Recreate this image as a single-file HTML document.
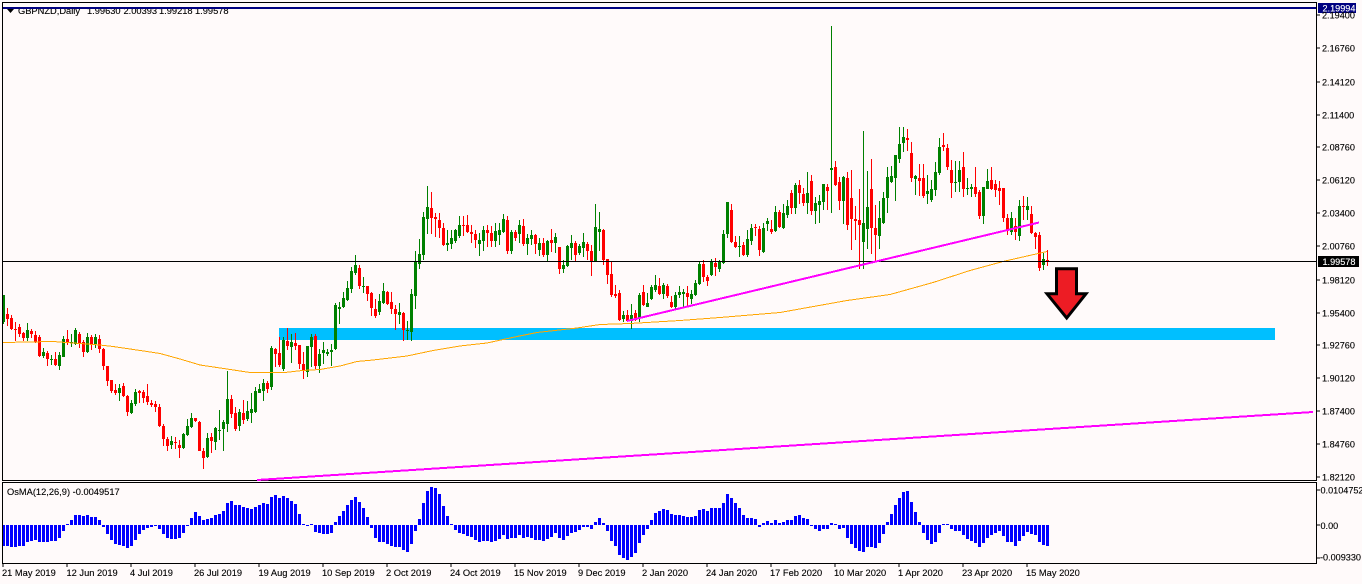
<!DOCTYPE html>
<html>
<head>
<meta charset="utf-8">
<title>GBPNZD Daily</title>
<style>
html,body{margin:0;padding:0;background:#fffafa;width:1362px;height:584px;overflow:hidden}
svg{display:block;position:absolute;left:0;top:0}
text{font-family:"Liberation Sans",sans-serif;font-size:9.3px;fill:#000;stroke:#000;stroke-width:.12}
text.n{font-size:9.1px}
text.w{fill:#fff;stroke:#fff}
</style>
</head>
<body>
<svg id="c" xmlns="http://www.w3.org/2000/svg" width="1362" height="584" viewBox="0 0 1362 584">
<rect x="0" y="0" width="1362" height="584" fill="#fffafa"/>
<rect x="279" y="328" width="996" height="12" fill="#00bfff"/>
<g id="candles" shape-rendering="crispEdges"></g>
<g id="osma" shape-rendering="crispEdges" fill="#0000ff"></g>
<polyline shape-rendering="crispEdges" fill="none" stroke="#ffa500" stroke-width="1" points="3,342.5 53,341.5 100,345 113,346.5 147,351.5 160,353.5 180,359 200,365 227,369 250,372.5 285,372.5 302,370.5 320,369.5 340,366 357,361.5 373,360 407,356 433,350.5 460,346 487,343 517,336.5 537,332.5 577,328 600,324.5 630,323.5 680,320.5 720,317.5 780,312.5 847,300.5 890,294.5 933,282.5 970,270.5 1003,261.5 1047,251.5"/>
<g shape-rendering="crispEdges" fill="#000">
<rect x="2" y="261" width="1314" height="1"/>
<rect x="2" y="2" width="1314" height="1"/>
<rect x="2" y="2" width="1" height="478"/>
<rect x="1316" y="2" width="1" height="478"/>
<rect x="2" y="480" width="1315" height="1"/>
<rect x="2" y="482" width="1315" height="1"/>
<rect x="2" y="482" width="1" height="81"/>
<rect x="1316" y="482" width="1" height="81"/>
<rect x="2" y="563" width="1315" height="1"/>
<path d="M1317 15h3M1317 48h3M1317 82h3M1317 115h3M1317 147h3M1317 180h3M1317 213h3M1317 246h3M1317 280h3M1317 313h3M1317 345h3M1317 378h3M1317 411h3M1317 444h3M1317 477h3M1317 490h3M1317 525h3M1317 558h3M3 564v3M67 564v3M131 564v3M195 564v3M259 564v3M323 564v3M387 564v3M451 564v3M515 564v3M579 564v3M643 564v3M707 564v3M771 564v3M835 564v3M899 564v3M963 564v3M1027 564v3" stroke="#000" stroke-width="1" fill="none"/>
</g>
<g>
<polygon points="7,9 14,9 10.5,13" fill="#000"/>
<text x="18" y="14">GBPNZD,Daily</text>
<text x="87" y="14">1.99630</text>
<text x="123.5" y="14">2.00393</text>
<text x="159" y="14">1.99218</text>
<text x="195" y="14">1.99578</text>
</g>
<rect x="3" y="7" width="1313" height="2" fill="#000080" shape-rendering="crispEdges"/>
<line x1="257" y1="480" x2="1313" y2="412" stroke="#ff00ff" stroke-width="2" shape-rendering="crispEdges"/>
<line x1="627" y1="321" x2="1039" y2="222.5" stroke="#ff00ff" stroke-width="2" shape-rendering="crispEdges"/>
<polygon points="1056.5,268.8 1076.5,268.8 1076.5,293.8 1086,293.8 1066.7,318 1047,293.8 1056.5,293.8" fill="#ed1c24" stroke="#000" stroke-width="3"/>
<g>
<rect x="1318" y="3" width="38" height="10" fill="#000080" shape-rendering="crispEdges"/>
<text class="n w" x="1322.5" y="11.5">2.19994</text>
<text class="n" x="1322" y="18.5">2.19400</text>
<text class="n" x="1322" y="51.5">2.16760</text>
<text class="n" x="1322" y="85.5">2.14120</text>
<text class="n" x="1322" y="118.5">2.11400</text>
<text class="n" x="1322" y="150.5">2.08760</text>
<text class="n" x="1322" y="183.5">2.06120</text>
<text class="n" x="1322" y="216.5">2.03400</text>
<text class="n" x="1322" y="249.5">2.00760</text>
<rect x="1318" y="256" width="41" height="11" fill="#000" shape-rendering="crispEdges"/>
<text class="n w" x="1322.5" y="265">1.99578</text>
<text class="n" x="1322" y="283.5">1.98120</text>
<text class="n" x="1322" y="316.5">1.95400</text>
<text class="n" x="1322" y="348.5">1.92760</text>
<text class="n" x="1322" y="381.5">1.90120</text>
<text class="n" x="1322" y="414.5">1.87400</text>
<text class="n" x="1322" y="447.5">1.84760</text>
<text class="n" x="1322" y="480.5">1.82120</text>
<text class="n" x="1320.5" y="493.5">0.0104752</text>
<text class="n" x="1320.5" y="529">0.00</text>
<text class="n" x="1320" y="560.5">-0.009330</text>
<text x="7" y="495">OsMA(12,26,9) -0.0049517</text>
<text x="2" y="576">21 May 2019</text>
<text x="66.5" y="576">12 Jun 2019</text>
<text x="130" y="576">4 Jul 2019</text>
<text x="194" y="576">26 Jul 2019</text>
<text x="258.5" y="576">19 Aug 2019</text>
<text x="322" y="576">10 Sep 2019</text>
<text x="386" y="576">2 Oct 2019</text>
<text x="450" y="576">24 Oct 2019</text>
<text x="514" y="576">15 Nov 2019</text>
<text x="578" y="576">9 Dec 2019</text>
<text x="642" y="576">2 Jan 2020</text>
<text x="706" y="576">24 Jan 2020</text>
<text x="770" y="576">17 Feb 2020</text>
<text x="834" y="576">10 Mar 2020</text>
<text x="898" y="576">1 Apr 2020</text>
<text x="962" y="576">23 Apr 2020</text>
<text x="1026" y="576">15 May 2020</text>
</g>
</svg>
<script>
(function(){
var a="g135,135,215,222 r175,192,206,228 r195,204,237,240 r215,237,240,272 r222,232,252,262 r245,250,264,272 g220,240,264,272 r238,243,252,265 r243,255,275,280 r255,262,318,320 g295,306,318,325 r302,310,326,348 g315,327,329,345 r305,327,345,348 g305,316,348,360 g258,267,320,322 r240,267,278,285 g253,276,280,290 g235,240,282,285 r245,252,280,295 r270,276,305,320 g248,262,305,310 r255,262,282,300 g252,262,282,295 r255,267,296,310 r295,297,347,360 r348,348,392,408 r390,390,424,428 r403,420,430,435 g402,415,430,452 r400,408,438,440 r436,438,486,498 g450,460,488,492 g418,426,462,468 r420,424,428,458 r420,426,444,458 r403,438,456,465 r450,460,465,472 r452,462,470,485 r462,470,528,530 r522,528,567,588 r562,567,587,603 g558,573,585,597 r562,576,578,596 r570,585,594,624 g548,552,595,598 g508,528,555,558 g490,503,532,535 r503,504,513,517 r512,515,602,602 r595,603,624,656 g549,564,621,624 r548,561,573,610 g530,534,575,600 g480,539,541,570 g510,516,537,603 g363,447,521,545 r436,447,491,505 r472,489,537,544 g478,487,527,543 r450,489,510,522 g452,484,507,512 g430,477,488,518 g412,423,486,490 g402,417,428,430 g388,400,423,452 r392,400,416,430 g288,294,412,420 r294,297,312,350 r262,309,346,350 g262,270,357,362 r235,274,287,300 g252,276,290,340 r250,279,287,300 r284,286,342,358 r306,343,360,388 g288,288,366,380 g252,262,290,350 r252,258,348,358 g296,312,348,368 g277,300,308,342 g296,306,312,318 g282,300,305,348 g160,165,298,300 g155,172,178,222".split(" ");
var b="g365,385,412,415 g332,354,390,392 g291,303,357,370 g255,285,310,315 r285,294,348,357 g322,348,350,368 r348,348,372,393 r367,369,414,438 r388,417,438,443 g372,393,426,435 g339,363,400,402 r362,366,402,405 r366,396,416,432 r405,417,432,480 g398,426,436,462 r425,429,480,513 g452,479,482,510 g358,372,485,512 g243,274,378,417 g207,252,282,297 g126,141,255,270 g48,111,147,192 r66,114,144,192 r129,141,147,201 r128,150,174,204 r158,174,225,229 g180,219,225,242 g180,204,222,237 g178,180,213,218 g138,165,198,205 r138,165,168,198 r135,165,186,190 r165,186,192,218 r180,192,210,234 g190,210,222,258 g168,180,213,242 r165,180,189,232 r168,189,213,232 g160,183,213,232 g160,180,195,225 g132,147,186,190 r138,150,243,252 g180,186,243,252 r180,186,204,212 g150,165,192,218 r147,168,222,228 g192,204,222,255 g180,195,207,225 r192,196,222,252 g205,219,240,258 r205,219,255,262 g210,213,255,274 r177,210,219,246 g189,201,219,250 r231,231,297,312 g270,285,297,308 g225,228,288,292 g195,219,234,270 r213,219,255,274 g222,228,249,255 g189,216,234,260 r216,222,243,270 r225,243,274,318 g102,171,276,276 g126,177,186,243 r177,180,270,285 r267,267,315,342 r272,312,375,380 r345,372,378,385 r360,369,450,453 g423,435,447,456 r420,435,453,456 g402,435,453,476 r420,429,450,453 g368,375,445,455 r345,366,405,408 g370,399,411,411 g345,351,387,390 g315,345,360,365 r324,348,372,375 g339,345,372,388 r342,348,378,384 r378,396,411,413 g366,375,411,420 g348,366,375,385".split(" ");
var d="g507,516,522,560 r498,519,531,558 g510,522,537,552 g480,489,525,528 g426,432,492,495 r420,432,471,486 r465,471,483,498 g417,423,465,468 r414,429,441,468 g420,423,447,456 g330,342,429,432 g246,246,342,354 r252,270,366,369 r348,366,381,384 g348,378,381,411 r366,375,405,408 g330,357,405,411 g312,324,363,375 r312,321,324,348 r318,327,390,408 g309,324,396,399 g294,303,312,333 r300,327,336,342 g258,276,333,336 r270,276,321,324 g252,279,324,327 g240,258,285,294 r210,219,264,282 g189,195,264,282 r180,195,219,252 r204,222,249,258 g156,219,249,282 r165,183,273,285 g231,249,273,312 g225,243,255,309 g192,192,246,270 r192,201,213,270 g-282,144,150,279 r123,141,195,198 r171,186,243,270 g168,171,243,312 r156,174,315,330 r150,234,297,390 r258,297,303,360 r207,300,315,447 g33,309,366,447 g153,261,327,387 r117,207,324,402 r255,324,345,423 g243,294,348,387 g216,234,309,312 g141,171,234,279 g138,168,186,190 g105,105,174,243 g21,72,117,129 g21,51,69,96 r27,54,60,93 r66,99,174,186 g165,168,177,225 r132,174,183,228 r132,174,228,234 g165,213,222,252 g180,207,240,246 g125,156,210,228 g54,81,159,165 r39,75,81,93 r72,84,141,150 r120,150,189,234 g123,186,189,216 g124,150,186,215 r96,141,207,231 g174,204,207,225 g192,201,207,231 r141,201,222,231 r210,216,288,297 g201,201,288,312 g147,183,207,207 r141,180,207,210 r180,192,210,231 r183,204,213,255 r204,204,294,306 r282,294,330,345 g276,294,336,345 r294,318,336,360 g240,258,348,363 r228,258,261,300 g231,258,270,300 r258,282,339,342 r336,339,351,387 r336,345,444,453 g399,417,435,450 r390,420,425,438".split(" ");
var o=[198,198,201,201,198,198,186,183,180,186,186,186,183,183,174,153,132,120,105,105,108,105,111,111,120,141,162,180,192,195,198,204,198,180,162,150,144,141,138,147,162,174,177,177,174,159,138,114,96,108,120,117,114,105,102,93,69,63,75,75,81,84,87,81,75,69,72,51,45,54,48,54,63,72,102,132,138,132,156,159,162,162,159,126,108,93,75,60,51,66,84,111,144,174,186,186,192,198,201,201,210,216,192,153,117,69,33,21,24,42,78,108,132,150,159,162,168,171,180,186,183,183,186,183,177,165,177,174,174,165,174,171,174,180,180,183,177,171,159,174,180,168,159,156,150,141,141,147,126,114,129,153,183,198,225,234,240,231,219,189,165,147,120,99,93,87,90,102,105,105,108,111,111,108,90,87,93,84,84,84,69,42,54,69,84,105,114,114,117,141,129,123,129,120,129,126,120,120,108,105,114,117,138,147,153,147,147,129,132,147,144,174,192,204,213,216,201,201,204,189,162,126,102,75,54,36,33,66,96,126,159,180,192,186,159,132,132,147,153,153,165,177,183,189,201,189,174,165,159,153,168,186,186,198,183,168,156,162,165,186,195,198];
var colG="#008000",colR="#ff0000",s="",i,x;
function add(list,off,start){for(var k=0;k<list.length;k++){var c=list[k][0],n=list[k].slice(1).split(",").map(Number);var xx=3+4*(start+k);var f=c==="g"?colG:colR;var h=Math.round(off+n[0]/3),t=Math.round(off+n[1]/3),bb=Math.round(off+n[2]/3),l=Math.round(off+n[3]/3);
s+='<rect x="'+xx+'" y="'+h+'" width="1" height="'+Math.max(1,l-h)+'" fill="'+f+'"/>';
s+='<rect x="'+(xx-1)+'" y="'+t+'" width="3" height="'+Math.max(1,bb-t)+'" fill="'+f+'"/>';}}
add(a,250,0);add(b,170,85);add(d,120,170);
document.getElementById("candles").innerHTML=s;
s="";
for(i=0;i<o.length;i++){x=2+4*i;var y=Math.round(480+o[i]/3);var t2=Math.min(y,525),h2=Math.max(1,Math.abs(y-525));
s+='<rect x="'+x+'" y="'+t2+'" width="3" height="'+h2+'"/>';}
document.getElementById("osma").innerHTML=s;
})();
</script>
</body>
</html>
